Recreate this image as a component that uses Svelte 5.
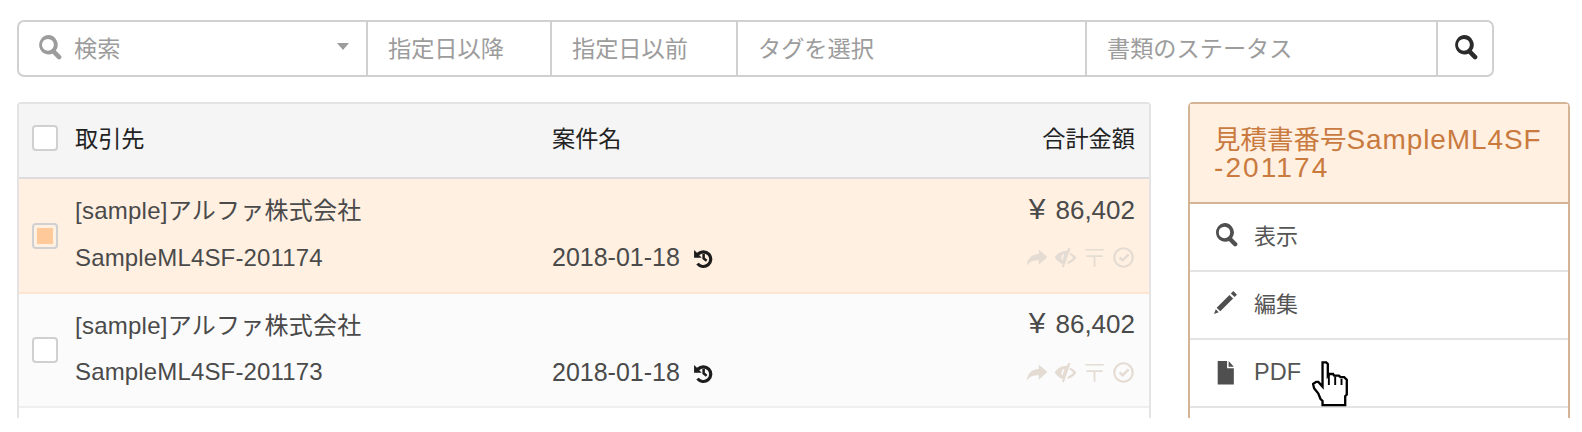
<script>
  const filters = [
    { label: '指定日以降', cls: 'date' },
    { label: '指定日以前', cls: 'date2' },
    { label: 'タグを選択', cls: 'tag' },
    { label: '書類のステータス', cls: 'status' }
  ];

  const rows = [
    { client: '[sample]アルファ株式会社', no: 'SampleML4SF-201174', date: '2018-01-18', total: '86,402', active: true },
    { client: '[sample]アルファ株式会社', no: 'SampleML4SF-201173', date: '2018-01-18', total: '86,402', active: false }
  ];

  const search = 'M11 1a9 9 0 0 1 7.300 14.300l4.500 4.500a2.100 2.100 0 0 1-3 3l-4.500-4.500A9 9 0 1 1 11 1zm0 3.500a5.500 5.500 0 1 0 0 11 5.500 5.500 0 0 0 0-11z';
</script>

<div class="page">
  <form class="searchbar">
    <div class="seg keyword">
      <svg class="glass" viewBox="0 0 24 24"><path d={search} /></svg>
      <span>検索</span>
      <i class="caret"></i>
    </div>
    {#each filters as f}
      <div class="seg {f.cls}"><span>{f.label}</span></div>
    {/each}
    <button type="button" class="go" aria-label="検索">
      <svg viewBox="0 0 24 24"><path d={search} /></svg>
    </button>
  </form>

  <div class="columns">
    <section class="list">
      <div class="head">
        <span class="check"></span>
        <span class="col-client">取引先</span>
        <span class="col-name">案件名</span>
        <span class="col-total">合計金額</span>
      </div>
      {#each rows as row}
        <div class="row" class:active={row.active}>
          <span class="check" class:on={row.active}></span>
          <div class="cells">
            <div class="line">
              <span class="col-client client">{row.client}</span>
              <span class="col-total amount"><span class="yen">¥</span>{row.total}</span>
            </div>
            <div class="line">
              <span class="col-client number">{row.no}</span>
              <span class="col-name date-text">
                {row.date}
                <svg class="history" viewBox="0 0 20 20">
                  <path d="M4.300 5.100A7.800 7.800 0 1 1 3.700 15.300l2.200-1.700a5 5 0 1 0 .4-6.500l2.200 2.200H1.800V2.600z" />
                  <path d="M9 5.800h2.200v3.600l2.200 1.700-1.300 1.700L9 10.500z" />
                </svg>
              </span>
              <span class="flags">
                <svg viewBox="0 0 20 20"><path d="M12 3l7.500 6.600-7.500 6.600v-3.900c-4.500 0-8 1-10.500 4.800.6-5.800 4-9.800 10.500-10.100z" /></svg>
                <svg viewBox="0 0 20 20">
                  <path d="M12.800 1.500l1.500.6-5.800 16.600-1.600-.6.800-2.500C4.600 14.700 2 12.400.6 10c1.700-3 5-5.700 9.400-5.700h.9zM9 6.800A3.500 3.500 0 0 0 7.400 12.500zM14 5.800c2.300 1 4.200 2.400 5.400 4.200-1.400 2.600-4.300 5-7.900 5.600l.7-2.100c1.900-.7 3.500-2 4.500-3.500-.9-1.200-2-2.100-3.400-2.800z" />
                </svg>
                <svg viewBox="0 0 20 20"><path d="M2 2.500h16v1.500H2zM3 8h14v1.600h-6.200V18H9.200V9.600H3z" /></svg>
                <svg viewBox="0 0 20 20">
                  <path d="M10 1a9 9 0 1 1 0 18 9 9 0 0 1 0-18zm0 1.900a7.100 7.100 0 1 0 0 14.200 7.100 7.100 0 0 0 0-14.200z" />
                  <path d="M13.700 6.500l1.500 1.500-6 6-3.300-3.300 1.500-1.500 1.800 1.800z" />
                </svg>
              </span>
            </div>
          </div>
        </div>
      {/each}
    </section>

    <aside class="panel">
      <h3>見積書番号<span class="ref">SampleML4SF</span><br /><span class="ref digits">-201174</span></h3>
      <ul>
        <li>
          <svg viewBox="0 0 24 24"><path d={search} /></svg>
          表示
        </li>
        <li>
          <svg viewBox="0 0 24 24"><path d="M19.500 1l3.500 3.500-2.300 2.300-3.500-3.500zM15.800 4.700l3.500 3.500L7 20.500 3.500 17zM2.700 18.500l2.800 2.800L1 23z" /></svg>
          編集
        </li>
        <li class="pdf-item">
          <svg viewBox="0 0 24 24"><path d="M4.500 1h9v7h6.500v15.500H4.500zM15 1l5 5.500h-5z" /></svg>
          <span class="pdf">PDF</span>
          <svg class="cursor" viewBox="0 0 37 46">
            <path fill="#fff" stroke="#000" stroke-width="2.200" d="M10 2.500h3.500l1.500 1.500v11l1-1.500h4l1 1.500h4.500l1.500 1.500h3.500l2.500 2.500v14l-1.500 1.500V43H10v-4l-2-2-2-5-4-5-1-4 3-2h2l4 4.500V4z" />
            <path fill="none" stroke="#000" stroke-width="1.800" d="M16 14v10M22 16v8M28 18v6" />
          </svg>
        </li>
        <li></li>
      </ul>
    </aside>
  </div>
</div>

<style>
  :global(body) {
    margin: 0;
    background: #fff;
  }

  .page {
    height: 418px;
    overflow: hidden;
    padding: 20px 12px 0 17px;
    font-family: "Liberation Sans", "Noto Sans CJK JP", sans-serif;
    font-size: 23.2px;
    color: #4a4a4a;
    box-sizing: border-box;
  }

  .searchbar {
    display: flex;
    width: 1477px;
    height: 57px;
    box-sizing: border-box;
    border: 2px solid #d0d0d0;
    border-radius: 7px;
    background: #fff;
  }

  .seg {
    display: flex;
    align-items: center;
    box-sizing: border-box;
    padding: 0 0 4px 20px;
    border-right: 2px solid #d0d0d0;
    color: #9c9c9c;
  }

  .keyword { width: 349px; padding-left: 17px; }
  .date { width: 184px; }
  .date2 { width: 186px; }
  .tag { width: 349px; }
  .status { width: 351px; }

  .glass {
    width: 26px;
    height: 26px;
    margin-right: 12px;
    fill: #9c9c9c;
  }

  .caret {
    margin-left: auto;
    margin-right: 17px;
    border-top: 7px solid #9c9c9c;
    border-left: 6px solid transparent;
    border-right: 6px solid transparent;
  }

  .go {
    flex: 1;
    padding: 0 0 3px;
    border: 0;
    background: none;
    display: flex;
    align-items: center;
    justify-content: center;
  }

  .go svg {
    width: 26px;
    height: 26px;
    fill: #2b2b2b;
  }

  .columns {
    display: flex;
    gap: 37px;
    margin-top: 25px;
  }

  .list {
    width: 1135px;
    box-sizing: border-box;
    border: 2px solid #e4e4e4;
    border-bottom: 0;
    border-radius: 4px 4px 0 0;
    height: 330px;
  }

  .head {
    display: flex;
    align-items: center;
    height: 73px;
    padding: 0 14px 0 13px;
    background: #f5f5f5;
    border-bottom: 2px solid #dcdcdc;
    color: #222;
  }

  .head > span {
    position: relative;
    top: -4px;
  }

  .head > .check { top: -3px; }

  .check {
    flex: none;
    width: 26px;
    height: 26px;
    margin-right: 17px;
    box-sizing: border-box;
    border: 2px solid #d0d0d0;
    border-radius: 4px;
    background: #fff;
  }

  .check.on {
    padding: 3px;
    background: #ffc999 content-box;
  }

  .col-client { width: 477px; }

  .col-name { flex: 1; white-space: nowrap; }

  .col-total { margin-left: auto; }

  .client {
    font-size: 24px;
    letter-spacing: 0.25px;
  }

  .number {
    font-size: 24px;
    letter-spacing: 0.15px;
  }

  .date-text { font-size: 25px; }

  .amount {
    font-size: 26px;
    position: relative;
    top: 1px;
  }

  .yen {
    font-size: 30px;
    line-height: 1;
    margin-right: 10px;
  }

  .row {
    display: flex;
    align-items: center;
    height: 114px;
    box-sizing: border-box;
    padding: 0 14px 0 13px;
    background: #fbfbfb;
    border-bottom: 2px solid #efefef;
  }

  .row.active {
    height: 115px;
    background: #fff0e2;
    border-bottom-color: #fde5d2;
  }

  .cells {
    flex: 1;
    min-width: 0;
    padding-bottom: 5px;
  }

  .line {
    display: flex;
    align-items: center;
    height: 49px;
  }

  .history {
    width: 23px;
    height: 23px;
    margin-left: 5px;
    vertical-align: -4px;
    fill: #1d1d1d;
  }

  .flags {
    display: flex;
    gap: 6px;
    margin-left: auto;
    fill: #e4dbd3;
  }

  .flags svg { width: 23px; height: 23px; }

  .panel {
    width: 382px;
    flex: none;
    box-sizing: border-box;
    border: 2px solid #d3b596;
    border-bottom: 0;
    border-radius: 5px 5px 0 0;
    height: 330px;
    color: #555;
    font-size: 22px;
  }

  h3 {
    margin: 0;
    height: 100px;
    box-sizing: border-box;
    padding: 22px 10px 0 24px;
    font-size: 26.5px;
    line-height: 27px;
    font-weight: 400;
    color: #c97a3e;
    background: #fff0e2;
    border-bottom: 2px solid #d3b596;
    white-space: nowrap;
  }

  .ref {
    font-size: 28px;
    letter-spacing: 0.9px;
  }

  .digits { letter-spacing: 2.1px; }

  ul {
    margin: 0;
    padding: 0;
    list-style: none;
  }

  li {
    display: flex;
    align-items: center;
    height: 68px;
    box-sizing: border-box;
    padding: 0 0 6px 23px;
    border-bottom: 2px solid #e4e4e4;
  }

  li > svg:first-child {
    width: 25px;
    height: 25px;
    margin-right: 16px;
    fill: #4f4f4f;
  }

  .pdf-item { padding-bottom: 2px; }

  .pdf { font-size: 23.5px; }

  .cursor {
    position: relative;
    top: 12px;
    width: 39px;
    height: 50px;
    margin-left: 11px;
  }
</style>
